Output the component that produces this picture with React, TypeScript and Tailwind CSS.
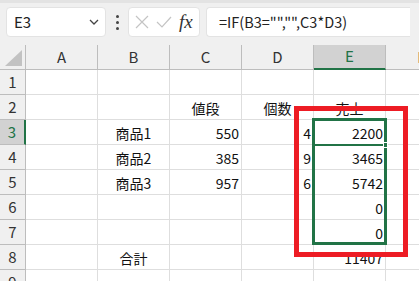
import React from 'react';

const COLS = ['A', 'B', 'C', 'D', 'E', 'F'];

type Cell = { t: string; a?: 'l' | 'c' | 'r' };

const ROWS: Record<number, Record<string, Cell>> = {
  2: { C: { t: '値段', a: 'c' }, D: { t: '個数', a: 'c' }, E: { t: '売上', a: 'c' } },
  3: { B: { t: '商品1', a: 'c' }, C: { t: '550', a: 'r' }, D: { t: '4', a: 'r' }, E: { t: '2200', a: 'r' } },
  4: { B: { t: '商品2', a: 'c' }, C: { t: '385', a: 'r' }, D: { t: '9', a: 'r' }, E: { t: '3465', a: 'r' } },
  5: { B: { t: '商品3', a: 'c' }, C: { t: '957', a: 'r' }, D: { t: '6', a: 'r' }, E: { t: '5742', a: 'r' } },
  6: { E: { t: '0', a: 'r' } },
  7: { E: { t: '0', a: 'r' } },
  8: { B: { t: '合計', a: 'c' }, E: { t: '11407', a: 'r' } },
};

const font = { fontFamily: '"Noto Sans CJK JP", "Noto Sans", sans-serif' };

function Toolbar() {
  return (
    <div className="h-[45px] bg-[#f0f0f0] flex flex-col">
      <div className="h-[3px] bg-[#e3e3e3]" />
      <div className="flex items-center pt-[4px] h-[34px]">
        <div className="ml-[6px] w-[100px] h-[30px] bg-white rounded-[4px] border border-[#e3e3e3] flex items-center justify-between pl-[7px] pr-[5px]">
          <span className="text-[15px] text-[#222]" style={font}>E3</span>
          <svg width="12" height="8" viewBox="0 0 12 8"><path d="M2 2 L6 6 L10 2" fill="none" stroke="#444" strokeWidth="1.3" /></svg>
        </div>
        <div className="w-[22px] flex flex-col items-center gap-[3px]">
          <div className="w-[3px] h-[3px] bg-[#444] rounded-full" />
          <div className="w-[3px] h-[3px] bg-[#444] rounded-full" />
          <div className="w-[3px] h-[3px] bg-[#444] rounded-full" />
        </div>
        <div className="w-[72px] h-[30px] bg-white rounded-[4px] border border-[#e3e3e3] flex items-center pl-[6px] gap-[7px]">
          <svg width="14" height="14" viewBox="0 0 14 14"><path d="M1 1 L13 13 M13 1 L1 13" stroke="#c4c4c4" strokeWidth="1.2" /></svg>
          <svg width="16" height="12" viewBox="0 0 16 12"><path d="M1 6 L6 11 L15 1" fill="none" stroke="#c4c4c4" strokeWidth="1.2" /></svg>
          <span className="italic text-[19px] text-[#333] leading-none -mt-[2px]" style={{ fontFamily: '"Liberation Serif", serif' }}>fx</span>
        </div>
        <div className="ml-[6px] w-[204px] h-[30px] bg-white rounded-l-[4px] border border-r-0 border-[#e3e3e3] flex items-center pl-[12px]">
          <span className="text-[14.5px] text-[#222]" style={font}>=IF(B3="","",C3*D3)</span>
        </div>
      </div>
    </div>
  );
}

function HeaderRow() {
  return (
    <div className="flex h-[25px]">
      <div className="w-[26px] shrink-0 bg-[#f0f0f0] border-r border-b border-[#bdbdbd] flex items-end justify-end pr-[3px] pb-[3px]">
        <svg width="17" height="16" viewBox="0 0 17 16"><path d="M17 0 L17 16 L0 16 Z" fill="#c2c2c2" /></svg>
      </div>
      {COLS.map((c) => {
        const active = c === 'E';
        return (
          <div
            key={c}
            className={
              active
                ? 'w-[72px] shrink-0 bg-[#d2d2d2] border-r border-[#bdbdbd] border-b-2 border-b-[#217346] flex items-center justify-center text-[15px] text-[#217346]'
                : 'w-[72px] shrink-0 bg-[#f0f0f0] border-r border-b border-[#bdbdbd] flex items-center justify-center text-[15px] text-[#333]'
            }
            style={font}
          >
            {c}
          </div>
        );
      })}
    </div>
  );
}

function Row({ n }: { n: number }) {
  const data = ROWS[n] || {};
  const active = n === 3;
  return (
    <div className="flex h-[25px]">
      <div
        className={
          active
            ? 'w-[26px] shrink-0 bg-[#d2d2d2] border-r-2 border-r-[#217346] border-b border-b-[#bdbdbd] flex items-center justify-center text-[15px] text-[#217346]'
            : 'w-[26px] shrink-0 bg-[#f0f0f0] border-r border-b border-[#bdbdbd] flex items-center justify-center text-[15px] text-[#333]'
        }
        style={font}
      >
        {n}
      </div>
      {COLS.map((c) => {
        const cell = data[c];
        const align = cell?.a === 'r' ? 'justify-end pr-[2px]' : cell?.a === 'c' ? 'justify-center' : 'justify-start pl-[2px]';
        return (
          <div
            key={c}
            className={`w-[72px] shrink-0 bg-white border-r border-b border-[#dedede] flex items-center pt-[2px] text-[14px] text-[#111] ${align}`}
            style={font}
          >
            {cell?.t}
          </div>
        );
      })}
    </div>
  );
}

export default function App() {
  return (
    <div className="w-[419px] h-[281px] overflow-hidden bg-white relative">
      <Toolbar />
      <div className="w-[600px]">
        <HeaderRow />
        {[1, 2, 3, 4, 5, 6, 7, 8, 9].map((n) => (
          <Row key={n} n={n} />
        ))}
      </div>
      {/* selection */}
      <div className="absolute left-[312px] top-[118px] w-[75px] h-[127px] border-[3px] border-[#217346]" />
      <div className="absolute left-[315px] top-[144px] w-[69px] h-[2px] bg-[#217346]" />
      <div className="absolute left-[383px] top-[142px] w-[5px] h-[6px] bg-[#217346] border border-white" />
      {/* annotation */}
      <div className="absolute left-[294px] top-[106px] w-[114px] h-[151px] border-[5px] border-[#ed1c24]" />
    </div>
  );
}
